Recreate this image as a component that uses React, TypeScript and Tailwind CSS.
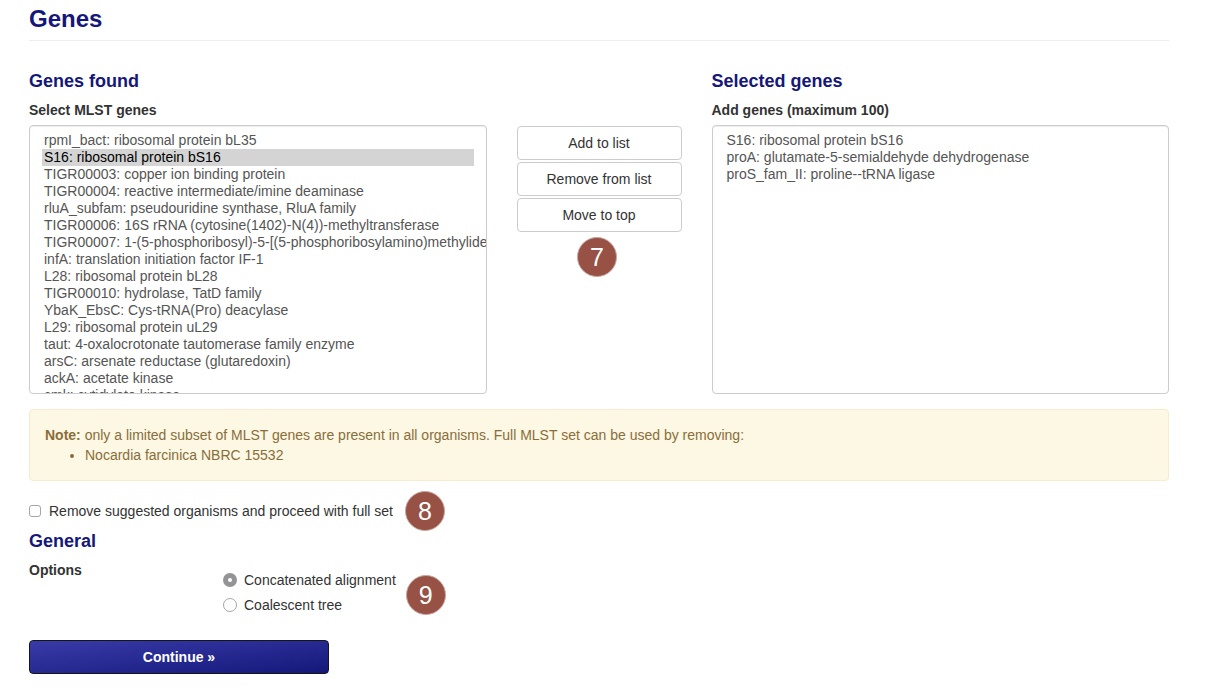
import { useState } from "react";
import type { ReactNode } from "react";

const foundGenes = [
  "rpmI_bact: ribosomal protein bL35",
  "S16: ribosomal protein bS16",
  "TIGR00003: copper ion binding protein",
  "TIGR00004: reactive intermediate/imine deaminase",
  "rluA_subfam: pseudouridine synthase, RluA family",
  "TIGR00006: 16S rRNA (cytosine(1402)-N(4))-methyltransferase",
  "TIGR00007: 1-(5-phosphoribosyl)-5-[(5-phosphoribosylamino)methylideneamino]imidazole-4-carboxamide isomerase",
  "infA: translation initiation factor IF-1",
  "L28: ribosomal protein bL28",
  "TIGR00010: hydrolase, TatD family",
  "YbaK_EbsC: Cys-tRNA(Pro) deacylase",
  "L29: ribosomal protein uL29",
  "taut: 4-oxalocrotonate tautomerase family enzyme",
  "arsC: arsenate reductase (glutaredoxin)",
  "ackA: acetate kinase",
  "cmk: cytidylate kinase",
];

const selectedGenes = [
  "S16: ribosomal protein bS16",
  "proA: glutamate-5-semialdehyde dehydrogenase",
  "proS_fam_II: proline--tRNA ligase",
];

function SectionHeading({ children }: { children: ReactNode }) {
  return <h4 className="text-[18px] leading-5 font-bold text-[#15177a]">{children}</h4>;
}

function StepBadge({ step }: { step: number }) {
  return (
    <span className="flex size-10 shrink-0 items-center justify-center rounded-full border border-[#c9a59e] bg-[#985145] text-[25px] leading-none text-white">
      {step}
    </span>
  );
}

interface GeneListProps {
  id: string;
  title: string;
  label: string;
  genes: string[];
  initial: string[];
}

function GeneList({ id, title, label, genes, initial }: GeneListProps) {
  return (
    <div className="col-span-5 min-w-0">
      <SectionHeading>{title}</SectionHeading>
      <label htmlFor={id} className="mt-[9px] mb-[5px] block font-bold">
        {label}
      </label>
      <select
        id={id}
        multiple
        defaultValue={initial}
        className="block h-[269px] w-full overflow-x-hidden rounded-sm border border-[#cccccc] bg-white px-3 py-1.5 text-[14px] text-[#555555] shadow-[inset_0_1px_1px_rgba(0,0,0,0.075)] [scrollbar-width:none]"
      >
        {genes.map((gene) => (
          <option key={gene} value={gene} className="px-0.5 pb-px checked:bg-[#d4d4d4] checked:text-black">
            {gene}
          </option>
        ))}
      </select>
    </div>
  );
}

function ListButton({ children }: { children: ReactNode }) {
  return (
    <button type="button" className="h-[34px] w-full rounded-sm border border-[#cccccc] bg-white text-center text-[#333333]">
      {children}
    </button>
  );
}

function Radio({ value, checked, onSelect, children }: { value: string; checked: boolean; onSelect: (v: string) => void; children: ReactNode }) {
  return (
    <label className="flex items-center gap-[7px]">
      <input
        type="radio"
        name="method"
        value={value}
        checked={checked}
        onChange={() => onSelect(value)}
        className="size-3.5 appearance-none rounded-full border border-[#a6a6a6] bg-white checked:border-5 checked:border-[#949496]"
      />
      {children}
    </label>
  );
}

export default function App() {
  const [method, setMethod] = useState("concatenated");

  return (
    <form
      className="mr-[54px] ml-[29px] pt-1.5 pb-6 font-['Liberation_Sans',Arial,sans-serif] text-[14px] leading-5 text-[#333333]"
      onSubmit={(e) => e.preventDefault()}
    >
      <h3 className="border-b border-[#eeeeee] pb-2 text-[24px] leading-[26px] font-bold text-[#15177a]">Genes</h3>

      <div className="mt-[30px] grid grid-cols-12 gap-x-[30px]">
        <GeneList id="found" title="Genes found" label="Select MLST genes" genes={foundGenes} initial={[foundGenes[1]]} />
        <div className="col-span-2 flex flex-col items-center gap-0.5 pt-[55px]">
          <ListButton>Add to list</ListButton>
          <ListButton>Remove from list</ListButton>
          <ListButton>Move to top</ListButton>
          <div className="mt-[3px] pr-1">
            <StepBadge step={7} />
          </div>
        </div>
        <GeneList id="selected" title="Selected genes" label="Add genes (maximum 100)" genes={selectedGenes} initial={[]} />
      </div>

      <div className="mt-[15px] rounded-sm border border-[#faebcc] bg-[#fcf8e3] p-[15px] text-[#8a6d3b]">
        <p>
          <strong>Note:</strong> only a limited subset of MLST genes are present in all organisms. Full MLST set can be used by removing:
        </p>
        <ul className="list-disc pl-10">
          <li>Nocardia farcinica NBRC 15532</li>
        </ul>
      </div>

      <div className="mt-2.5 flex items-center gap-3">
        <label className="flex items-center gap-2">
          <input
            type="checkbox"
            className="size-3 appearance-none rounded-[3px] border border-[#a6a6a6] bg-white checked:bg-[#949496]"
          />
          Remove suggested organisms and proceed with full set
        </label>
        <StepBadge step={8} />
      </div>

      <SectionHeading>General</SectionHeading>
      <div className="mt-[9px] flex">
        <span id="options-label" className="w-[194px] shrink-0 font-bold">
          Options
        </span>
        <div className="flex items-end gap-2.5 pt-2.5">
          <div role="radiogroup" aria-labelledby="options-label" className="flex flex-col gap-[5px]">
            <Radio value="concatenated" checked={method === "concatenated"} onSelect={setMethod}>
              Concatenated alignment
            </Radio>
            <Radio value="coalescent" checked={method === "coalescent"} onSelect={setMethod}>
              Coalescent tree
            </Radio>
          </div>
          <StepBadge step={9} />
        </div>
      </div>

      <button
        type="submit"
        className="mt-[25px] block h-[34px] w-[300px] rounded-sm border border-[#151515] bg-linear-to-br from-[#393ba8] to-[#15177a] text-center font-bold text-white"
      >
        Continue »
      </button>
    </form>
  );
}
